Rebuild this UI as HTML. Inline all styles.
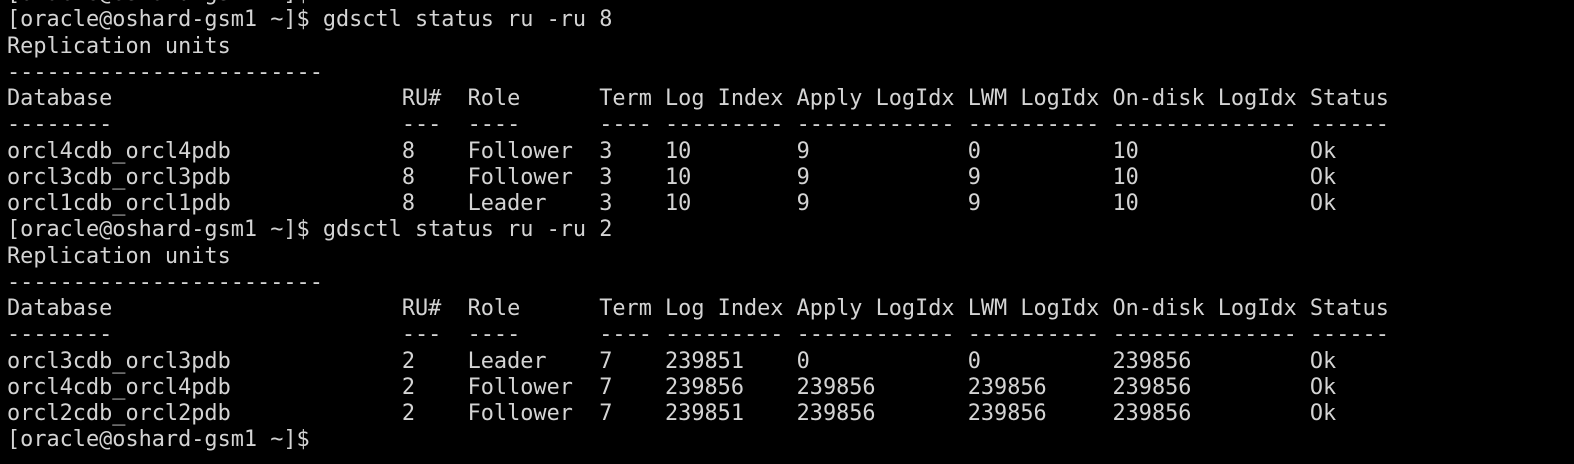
<!DOCTYPE html>
<html><head><style>
html,body{margin:0;padding:0;background:#000;width:1574px;height:464px;overflow:hidden}
pre{position:absolute;left:7px;top:-19px;margin:0;font-family:"DejaVu Sans Mono","Liberation Mono",monospace;font-size:21.87px;line-height:26.25px;color:#d4d4d4}
</style></head><body><pre>[oracle@oshard-gsm1 ~]$
[oracle@oshard-gsm1 ~]$ gdsctl status ru -ru 8
Replication units
------------------------
Database                      RU#  Role      Term Log Index Apply LogIdx LWM LogIdx On-disk LogIdx Status
--------                      ---  ----      ---- --------- ------------ ---------- -------------- ------
orcl4cdb_orcl4pdb             8    Follower  3    10        9            0          10             Ok
orcl3cdb_orcl3pdb             8    Follower  3    10        9            9          10             Ok
orcl1cdb_orcl1pdb             8    Leader    3    10        9            9          10             Ok
[oracle@oshard-gsm1 ~]$ gdsctl status ru -ru 2
Replication units
------------------------
Database                      RU#  Role      Term Log Index Apply LogIdx LWM LogIdx On-disk LogIdx Status
--------                      ---  ----      ---- --------- ------------ ---------- -------------- ------
orcl3cdb_orcl3pdb             2    Leader    7    239851    0            0          239856         Ok
orcl4cdb_orcl4pdb             2    Follower  7    239856    239856       239856     239856         Ok
orcl2cdb_orcl2pdb             2    Follower  7    239851    239856       239856     239856         Ok
[oracle@oshard-gsm1 ~]$</pre></body></html>
